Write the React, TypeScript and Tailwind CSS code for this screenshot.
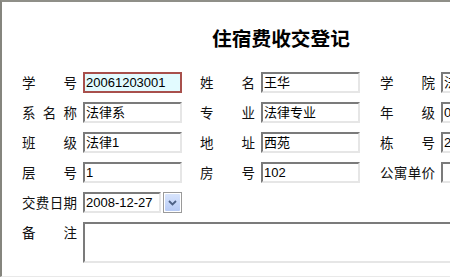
import React from "react";

const CJK = "font-['SimSun','Noto_Sans_CJK_SC',sans-serif]";

const insetBox =
  "border-2 border-t-[#7b7b7b] border-l-[#7b7b7b] border-r-[#e6e6e6] border-b-[#e6e6e6] bg-white";

interface Field {
  label: string;
  value?: string;
  focused?: boolean;
}

const ROWS: Field[][] = [
  [
    { label: "学号", value: "20061203001", focused: true },
    { label: "姓名", value: "王华" },
    { label: "学院", value: "法学院" },
  ],
  [
    { label: "系名称", value: "法律系" },
    { label: "专业", value: "法律专业" },
    { label: "年级", value: "06" },
  ],
  [
    { label: "班级", value: "法律1" },
    { label: "地址", value: "西苑" },
    { label: "栋号", value: "2" },
  ],
  [
    { label: "层号", value: "1" },
    { label: "房号", value: "102" },
    { label: "公寓单价", value: "" },
  ],
];

function Label({ text, className = "" }: { text: string; className?: string }) {
  return (
    <span
      className={`block w-[55px] shrink-0 text-[13.5px] leading-none text-[#111] text-justify [text-align-last:justify] ${CJK} ${className}`}
    >
      {text}
    </span>
  );
}

function Value({ value }: { value?: string }) {
  return (
    <span className="text-[13px] leading-none text-black font-['Liberation_Sans','Noto_Sans_CJK_SC',sans-serif] whitespace-nowrap">
      {value}
    </span>
  );
}

function FieldCell({ field }: { field: Field }) {
  const box = field.focused
    ? "border-2 border-[#a8504c] bg-[#e2fbff]"
    : insetBox;
  return (
    <div className="flex items-center gap-[6px]">
      <Label text={field.label} />
      <div className={`w-[99px] h-[21px] shrink-0 flex items-center pl-[1px] overflow-hidden ${box}`}>
        <Value value={field.value} />
      </div>
    </div>
  );
}

export default function App() {
  return (
    <div className="w-full h-[280px] overflow-hidden bg-white">
      <div className="h-[277px] w-[700px] border-t-2 border-l-2 border-t-[#8f8f88] border-l-[#85857e] border-b border-b-[#e9e9e9]">
        <div className="w-[558px] pt-[24px] text-center">
          <h1 className={`text-[19.7px] leading-[24px] font-bold text-black ${CJK}`}>
            住宿费收交登记
          </h1>
        </div>

        <div className="mt-[22px] pl-[20px] flex flex-col gap-[9px]">
          {ROWS.map((row) => (
            <div
              key={row[0].label}
              className="grid grid-cols-[178px_180px_auto]"
            >
              {row.map((f) => (
                <FieldCell key={f.label} field={f} />
              ))}
            </div>
          ))}

          <div className="flex items-center gap-[6px]">
            <Label text="交费日期" />
            <div className="flex items-center gap-[2px]">
              <div className={`w-[78px] h-[21px] flex items-center pl-[1px] ${insetBox}`}>
                <Value value="2008-12-27" />
              </div>
              <div className="w-[19px] h-[21px] border border-[#9a9a9a] p-[1px] bg-white">
                <div className="w-full h-full bg-gradient-to-b from-[#d8e4fc] to-[#b7cbf5] flex items-center justify-center rounded-[1px]">
                  <svg width="9" height="6" viewBox="0 0 9 6">
                    <path d="M1 1 L4.5 4.5 L8 1" fill="none" stroke="#4d6185" strokeWidth="1.8" />
                  </svg>
                </div>
              </div>
            </div>
          </div>

          <div className="flex items-start gap-[6px]">
            <Label text="备注" className="pt-[4px]" />
            <div className={`w-[500px] h-[41px] ${insetBox}`} />
          </div>
        </div>
      </div>
    </div>
  );
}
